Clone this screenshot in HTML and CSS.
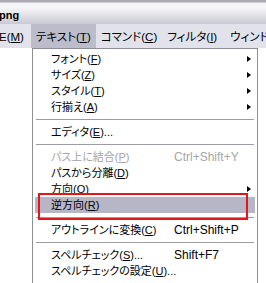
FILE: index.html
```html
<!DOCTYPE html>
<html lang="ja">
<head>
  <meta charset="utf-8"/>
  <title>テキストメニュー</title>
  <link rel="stylesheet" href="styles.css">
</head>
<body>
  <div class="titlebar"><span class="title">png</span></div>

  <div class="menubar">
    <span class="bar-item first">E(<u>M</u>)</span>
    <span class="bar-item active">テキスト(<u>T</u>)</span>
    <span class="bar-item">コマンド(<u>C</u>)</span>
    <span class="bar-item wide">フィルタ(<u>I</u>)</span>
    <span class="bar-item">ウィンドウ</span>
  </div>

  <div class="menu">
    <div class="item"><span class="label">フォント(<u>F</u>)</span><span class="arrow"></span></div>
    <div class="item"><span class="label">サイズ(<u>Z</u>)</span><span class="arrow"></span></div>
    <div class="item"><span class="label">スタイル(<u>T</u>)</span><span class="arrow"></span></div>
    <div class="item"><span class="label">行揃え(<u>A</u>)</span><span class="arrow"></span></div>
    <div class="sep"></div>
    <div class="item"><span class="label">エディタ(<u>E</u>)...</span></div>
    <div class="sep"></div>
    <div class="item disabled"><span class="label">パス上に結合(<u>P</u>)</span><span class="keys">Ctrl+Shift+Y</span></div>
    <div class="item"><span class="label">パスから分離(<u>D</u>)</span></div>
    <div class="item"><span class="label">方向(<u>O</u>)</span><span class="arrow"></span></div>
    <div class="item selected"><span class="label">逆方向(<u>R</u>)</span></div>
    <div class="sep"></div>
    <div class="item"><span class="label">アウトラインに変換(<u>C</u>)</span><span class="keys">Ctrl+Shift+P</span></div>
    <div class="sep"></div>
    <div class="item"><span class="label">スペルチェック(<u>S</u>)...</span><span class="keys">Shift+F7</span></div>
    <div class="item"><span class="label">スペルチェックの設定(<u>U</u>)...</span></div>
  </div>

  <!-- red annotation box around 逆方向 -->
  <div class="callout"></div>
</body>
</html>
```

FILE: styles.css
```css
html, body { margin:0; padding:0; background:#fff; }
body { width:266px; height:283px; overflow:hidden; position:relative; font-family:"Liberation Sans", "Noto Sans CJK JP", sans-serif; font-size:11px; color:#000; font-feature-settings:"palt"; }

.titlebar { height:24px; box-sizing:border-box; background:linear-gradient(#a9a9b1 0, #a9a9b1 2px, #f4f4f8 3px, #f7f7fa 7px, #c9c9d3 24px); display:flex; align-items:flex-end; padding-bottom:3px; }
.title { font-weight:bold; font-size:11px; margin-left:-1px; line-height:11px; }

.menubar { height:24px; background:#e2e2ea; display:flex; align-items:stretch; white-space:nowrap; overflow:hidden; font-size:11.5px; }
.bar-item { padding:0 5px; display:flex; align-items:center; line-height:14px; padding-top:1px; flex:none; }
.bar-item.first { margin-left:-6px; padding-right:7px; }
.bar-item.active { background:#bcbccb; }
.bar-item.wide { padding-right:8px; }
.bar-item u { text-underline-offset:1px; }

.menu { margin-left:32px; width:226px; height:235px; box-sizing:border-box; border:1px solid #8e8e96; border-bottom:none; background:#fff; padding-top:2px; }
.item { height:16px; display:flex; align-items:center; padding-left:16px; padding-right:4px; margin:0 2px; line-height:14px; white-space:nowrap; }
.item .label { width:123px; flex:none; }
.item .keys { font-size:12px; }
.item .arrow { margin-left:auto; width:0; height:0; border-top:3.5px solid transparent; border-bottom:3.5px solid transparent; border-left:4px solid #000; }
.item.disabled { color:#a6a6a6; }
.item.selected { background:#b6b6c6; }
.item u { text-underline-offset:1px; }

.sep { height:1px; margin:4px 3px; background:#9c9ca4; box-shadow:0 1px 0 #fff; }

.callout { position:absolute; left:38px; top:193px; width:210px; height:27px; box-sizing:border-box; border:2px solid #e8141c; }
```
